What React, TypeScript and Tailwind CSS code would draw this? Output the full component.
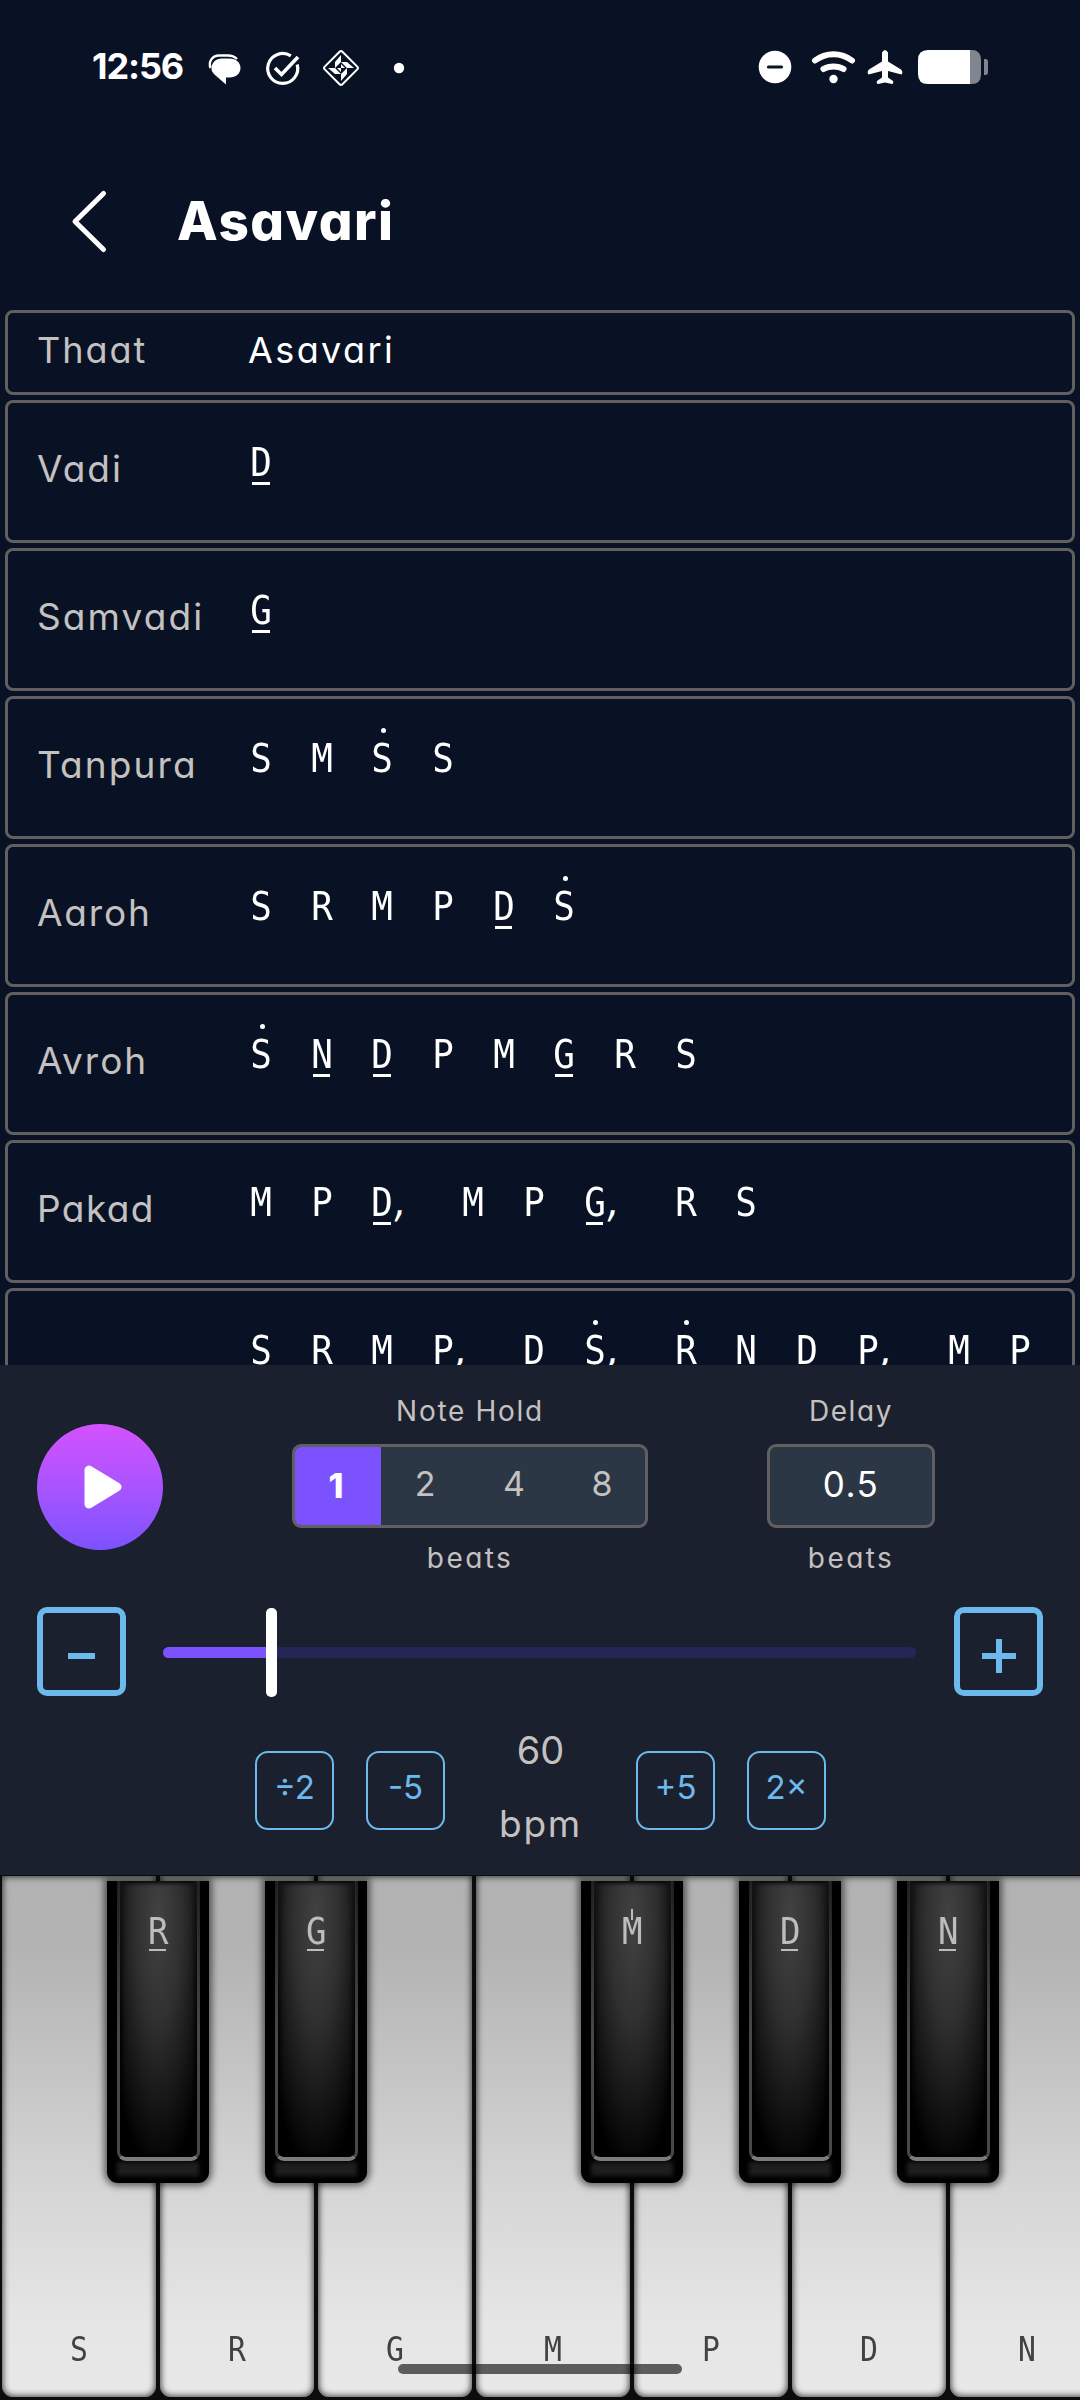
import React from "react";

type Note = { n: string; komal?: boolean; high?: boolean; comma?: boolean };

const parse = (s: string): Note[] =>
  s.split(" ").map((t) => ({
    n: t[0],
    komal: t.includes("_"),
    high: t.includes("'"),
    comma: t.includes(","),
  }));

const rows: { label: string; track: string; notes: Note[] }[] = [
  { label: "Vadi", track: "tracking-[2px]", notes: parse("D_") },
  { label: "Samvadi", track: "tracking-[2.1px]", notes: parse("G_") },
  { label: "Tanpura", track: "tracking-[2.1px]", notes: parse("S M S' S") },
  { label: "Aaroh", track: "tracking-[1.8px]", notes: parse("S R M P D_ S'") },
  { label: "Avroh", track: "tracking-[2px]", notes: parse("S' N_ D_ P M G_ R S") },
  { label: "Pakad", track: "tracking-[1.4px]", notes: parse("M P D_, M P G_, R S") },
  { label: "", track: "", notes: parse("S R M P, D S', R' N D P, M P") },
];

const sans = "font-[Inter,sans-serif] [font-feature-settings:'cv11']";
const mono = "font-['DejaVu_Sans_Mono',monospace]";

function NoteLine({ notes }: { notes: Note[] }) {
  return (
    <div className={`flex ${mono} text-[39px] leading-[44px] text-white`}>
      {notes.map((x, i) => (
        <div key={i} className={`relative shrink-0 ${x.comma ? "w-[91px]" : "w-[60.7px]"}`}>
          <span className="flex w-[24px] scale-x-92 justify-center">{x.n}</span>
          {x.comma && <span className="absolute top-0 left-[19px] scale-x-80 -skew-x-12">,</span>}
          {x.komal && <i className="absolute top-[41px] left-[3px] h-[2.5px] w-[17.5px] bg-white" />}
          {x.high && <i className="absolute top-[-9px] left-[10.5px] size-[5px] rounded-full bg-white" />}
        </div>
      ))}
    </div>
  );
}

function StatusBar() {
  return (
    <div className="flex h-[134px] items-start pt-[48px] pl-[92px] text-white">
      <div className="h-[38px] w-[92px] font-[Inter,sans-serif] text-[36px] leading-[36px] font-bold tracking-[-1.1px] whitespace-nowrap">12:56</div>
      <svg className="ml-[22px]" width="204" height="44" viewBox="206 48 204 44" fill="none">
        <path d="M210.500 68C208 61 213 55.500 219 55.500H228C232 55.500 235 57 237 59" stroke="#fff" strokeWidth="2.400" />
        <path d="M222 58.500H229.500C236 58.500 240.500 62.500 240.500 68S236 77.500 229.500 77.500H226V84.500L215 75C212.500 72.500 211.500 71 211.500 68.500C211.500 62.500 216 58.500 222 58.500Z" fill="#fff" />
        <path d="M290.800 55.800A15 15 0 1 0 297.200 64.500" stroke="#fff" strokeWidth="3.200" />
        <path d="M275 68L281.500 74.500L298 57" stroke="#fff" strokeWidth="3.600" />
        <rect x="328.500" y="55.500" width="25" height="25" rx="2" transform="rotate(45 341 68)" stroke="#fff" strokeWidth="2" />
        <path d="M341 55V62H335ZM354 68H347V62ZM341 81V74H347ZM328 68H335V74ZM335 62H341L335 68ZM347 62V68L341 62ZM347 74H341L347 68ZM335 74V68L341 74ZM341 64L345 68H341ZM341 72L337 68H341Z" fill="#fff" />
        <circle cx="399" cy="68" r="5.200" fill="#fff" />
      </svg>
      <svg className="ml-[346px]" width="236" height="44" viewBox="756 48 236 44" fill="none">
        <circle cx="775" cy="67" r="16.300" fill="#fff" />
        <path d="M768.500 67H781.500" stroke="#0a1224" strokeWidth="3.200" strokeLinecap="round" />
        <path d="M815 60.500C826 52 841 52 852 60.500" stroke="#fff" strokeWidth="6" strokeLinecap="round" />
        <path d="M823.500 69C829 65.500 838 65.500 843.500 69" stroke="#fff" strokeWidth="6" strokeLinecap="round" />
        <circle cx="833.500" cy="79" r="4.200" fill="#fff" />
        <path d="M882 52.500Q885 47.500 888 52.500V61.500L901 69.500Q903.500 72 901.500 74.500L888 71V77.500L893 81Q894 83.500 892 84L885 82.500L878 84Q876 83.500 877 81L882 77.500V71L868.500 74.500Q866.500 72 869 69.500L882 61.500Z" fill="#fff" />
        <path d="M970 50H971.500Q981 50 981 59.500V74.500Q981 84 971.500 84H970Z" fill="#81858f" />
        <path d="M970 50H928Q918 50 918 60V74Q918 84 928 84H970Z" fill="#fff" />
        <path d="M984 59H985.500Q988 59 988 62V72Q988 75 985.500 75H984Z" fill="#81858f" />
      </svg>
    </div>
  );
}

const whites = ["S", "R", "G", "M", "P", "D", "N"];
const blacks: Record<number, string> = { 0: "R", 1: "G", 3: "M", 4: "D", 5: "N" };

function BlackKey({ n }: { n: string }) {
  return (
    <div className="absolute top-[6px] right-[-51px] z-10 flex h-[302px] w-[102px] justify-center rounded-b-[11px] bg-black shadow-[0_0_7px_3px_rgba(0,0,0,0.55)]">
      <div className="absolute bottom-[7px] h-[14px] w-[82px] bg-[#1e1e1e] blur-[2px]" />
      <div className="relative flex h-[280px] w-[83px] justify-center rounded-b-[9px] border-x-[3px] border-b-[4px] border-x-[#484848] border-b-[#7c7c7c] bg-[radial-gradient(ellipse_56px_255px_at_50%_14%,#424242_0%,#303030_40%,#101010_80%,#000_100%)] shadow-[inset_0_0_4px_2px_#000]">
        <div className="absolute inset-x-[-3px] top-0 h-[150px] bg-linear-to-b from-[#1a1a1a] to-transparent [mask-image:linear-gradient(90deg,#000,transparent_14%,transparent_86%,#000)]" />
        <span className={`relative mt-[29px] h-[46px] ${mono} text-[37px] leading-[44px] text-[#bdbdbd]`}>
          <span className="inline-block scale-x-92">{n}</span>
          {n === "M" ? (
            <i className="absolute top-[-1px] left-[10px] h-[11px] w-[2px] bg-[#bdbdbd]" />
          ) : (
            <i className="absolute top-[39px] left-[2.5px] h-[2px] w-[17px] bg-[#bdbdbd]" />
          )}
        </span>
      </div>
    </div>
  );
}

function Piano() {
  return (
    <div className="relative h-[525px] w-[1080px] overflow-hidden bg-[#0c0c0c]">
      <div className="flex w-[1106px]">
        {whites.map((n, i) => (
          <div key={n} className="relative h-[525px] w-[158px] shrink-0 pt-px pl-[2px]">
            <div className="flex h-[521px] w-[154px] items-end justify-center rounded-b-[11px] bg-[linear-gradient(180deg,#b2b2b2_0%,#b3b3b3_14%,#d4d4d4_58%,#e6e6e6_86%,#e8e8e8_100%)] shadow-[inset_0_0_6px_1px_rgba(20,20,20,0.8)]">
              <span className={`mb-[25px] scale-x-90 ${mono} text-[33px] leading-[44px] text-[#424242]`}>{n}</span>
            </div>
            {blacks[i] && <BlackKey n={blacks[i]} />}
          </div>
        ))}
      </div>
      <div className="absolute top-[489px] left-[398px] z-20 h-[10px] w-[284px] rounded-full bg-black/60" />
    </div>
  );
}

const small = "flex h-[79px] w-[79px] items-center justify-center rounded-[13px] border-2 border-[#6db8ec] pb-[6px] text-[33px] text-[#6db8ec]";

function Controls() {
  return (
    <div className="relative h-[510px] bg-[#1b202f] text-[#c4c1c0]">
      <div className="flex h-[242px] items-start">
        <div className="mt-[59px] ml-[37px] flex size-[126px] items-center justify-center rounded-full bg-linear-to-b from-[#d451ff] to-[#7c51ff]">
          <svg className="ml-[6px]" width="38" height="44" viewBox="0 0 38 44"><path d="M5 5V39L33 22Z" fill="#fff" stroke="#fff" strokeWidth="9" strokeLinejoin="round" /></svg>
        </div>
        <div className="ml-[129px] flex w-[356px] flex-col items-center pt-[25px]">
          <div className="h-[54px] text-[28px] leading-[42px] tracking-[1.7px]">Note Hold</div>
          <div className="flex h-[84px] w-full overflow-hidden rounded-[9px] border-[3px] border-[#615f5f] bg-[#2c3745] text-[34px] leading-[74px]">
            <div className="w-[86px] bg-[#7c52ff] pt-[2px] pr-[4px] text-center font-extrabold text-white">1</div>
            <div className="w-[88px] text-center">2</div>
            <div className="w-[90px] text-center">4</div>
            <div className="w-[86px] text-center">8</div>
          </div>
          <div className="mt-[9px] text-[28px] leading-[42px] tracking-[2.4px]">beats</div>
        </div>
        <div className="ml-[119px] flex w-[168px] flex-col items-center pt-[25px]">
          <div className="h-[54px] text-[28px] leading-[42px] tracking-[1.6px]">Delay</div>
          <div className="h-[84px] w-full rounded-[9px] border-[3px] border-[#615f5f] bg-[#2c3745] text-center text-[35px] leading-[74px] tracking-[1.5px] text-white">0.5</div>
          <div className="mt-[9px] text-[28px] leading-[42px] tracking-[2.4px]">beats</div>
        </div>
      </div>
      <div className="flex h-[89px] items-center px-[37px]">
        <button className="flex size-[89px] items-center justify-center rounded-[10px] border-[6px] border-[#6db8ec]">
          <i className="mt-[9px] h-[6px] w-[27px] bg-[#6db8ec]" />
        </button>
        <div className="relative top-px ml-[37px] h-[11px] w-[753px] rounded-full bg-[#262557]">
          <div className="h-[11px] w-[108px] rounded-l-full bg-[#7c52ff]" />
          <div className="absolute top-[-39px] left-[103px] h-[89px] w-[11px] rounded-[5px] bg-white" />
        </div>
        <button className="relative ml-auto flex size-[89px] items-center justify-center rounded-[10px] border-[6px] border-[#6db8ec]">
          <svg className="mt-[9px]" width="34" height="34"><path d="M17 0V34M0 17H34" stroke="#6db8ec" strokeWidth="6" /></svg>
        </button>
      </div>
      <div className="flex pl-[255px]">
        <div className={`mt-[55px] ${small}`}>÷2</div>
        <div className={`mt-[55px] ml-[32px] ${small}`}>-5</div>
        <div className="flex w-[191px] flex-col items-center pt-[17px] text-[38px] leading-[74px]">
          <div>60</div>
          <div className="text-[37px] tracking-[1.8px]">bpm</div>
        </div>
        <div className={`mt-[55px] ${small}`}>+5</div>
        <div className={`mt-[55px] ml-[32px] ${small}`}>2×</div>
      </div>
    </div>
  );
}

export default function App() {
  return (
    <div className={`h-[2400px] w-[1080px] overflow-hidden bg-[#091224] ${sans}`}>
      <StatusBar />
      <div className="flex h-[176px] items-start text-white">
        <svg className="mt-[54px] ml-[70px]" width="40" height="68" viewBox="70 188 40 68" fill="none">
          <path d="M103.500 193.500L75 221.500L103.500 249.500" stroke="#fff" strokeWidth="5" strokeLinecap="round" strokeLinejoin="round" />
        </svg>
        <h1 className="mt-[55px] ml-[67px] text-[53px] leading-[64px] font-extrabold tracking-[1.5px]">Asavari</h1>
      </div>
      <div className="h-[1055px] overflow-hidden px-[5px]">
        <div className="flex h-[85px] rounded-[8px] border-[3px] border-[#615f5f] pl-[29px] text-[36px] leading-[74px] tracking-[2px]">
          <div className="w-[211px] text-[#c4c1c0]">Thaat</div>
          <div className="tracking-[2.4px] text-white">Asavari</div>
        </div>
        {rows.map((r, i) => (
          <div key={i} className="mt-[5px] flex h-[143px] rounded-[8px] border-[3px] border-[#615f5f] pl-[29px]">
            <div className={`w-[212px] pt-[42px] text-[37px] leading-[48px] text-[#c4c1c0] ${r.track}`}>{r.label}</div>
            <div className="pt-[38px]"><NoteLine notes={r.notes} /></div>
          </div>
        ))}
      </div>
      <Controls />
      <Piano />
    </div>
  );
}
